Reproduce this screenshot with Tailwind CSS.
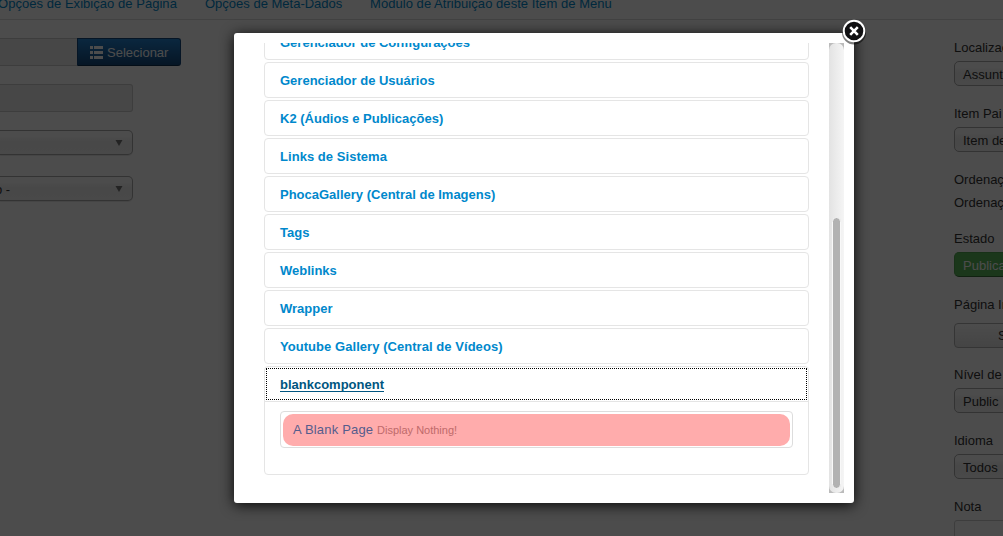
<!DOCTYPE html>
<html lang="pt-BR">
<head>
<meta charset="utf-8">
<title>Item de Menu</title>
<script src="https://cdn.jsdelivr.net/npm/@tailwindcss/browser@4"></script>
</head>
<body class="relative h-[536px] w-[1003px] overflow-hidden bg-white font-['Liberation_Sans',Arial,sans-serif] text-[13px] leading-[18px] text-[#333]">
<div class="flex h-full flex-col whitespace-nowrap">
  <nav class="-ml-0.5 flex h-5 shrink-0 items-start gap-7 border-b border-[#ddd] text-[#0088cc]">
    <a class="-mt-[5px] w-[179px] tracking-[0.04px]">Opções de Exibição de Página</a>
    <a class="-mt-[5px] w-[137px]">Opções de Meta-Dados</a>
    <a class="-mt-[5px] tracking-[0.05px]">Módulo de Atribuição deste Item de Menu</a>
  </nav>
  <div class="flex grow justify-between">
    <main class="flex w-[181px] flex-col items-start pt-[18px]">
      <div class="flex h-7 w-full">
        <div class="w-[77px] border-y border-[#ccc] bg-[#eee]"></div>
        <button class="flex grow items-center rounded-r-[3px] border border-[#15497c] border-b-[#0d2e4e] bg-linear-to-b from-[#2384d3] to-[#15497c] pl-3 text-white">
          <svg class="mr-1 h-[13px] w-[13px]" viewBox="0 0 13 13" fill="#fff"><path d="M0 0h3v3H0zM4 0h9v3H4zM0 5h3v3H0zM4 5h9v3H4zM0 10h3v3H0zM4 10h9v3H4z"/></svg>
          <span class="pt-0.5">Selecionar</span>
        </button>
      </div>
      <div class="mt-[18px] h-7 w-[133px] rounded-r-[3px] border border-l-0 border-[#ccc] bg-[#eee]"></div>
      <div class="mt-[18px] flex h-[25px] w-[133px] items-center justify-end rounded-r-[5px] border border-l-0 border-[#aaa] bg-linear-to-b from-white from-20% via-[#f0f0f0] via-50% to-[#f4f4f4] pr-[9px] shadow-[0_1px_1px_rgba(0,0,0,.1)]">
        <svg class="h-[6px] w-[8px]" viewBox="0 0 8 6" fill="#777"><path d="M.5 0h7L4 6z"/></svg>
      </div>
      <div class="mt-[21px] flex h-[25px] w-[133px] items-center justify-between rounded-r-[5px] border border-l-0 border-[#aaa] bg-linear-to-b from-white from-20% via-[#f0f0f0] via-50% to-[#f4f4f4] pr-[9px] shadow-[0_1px_1px_rgba(0,0,0,.1)]">
        <span class="-ml-[5px] pt-0.5">o -</span>
        <svg class="h-[6px] w-[8px]" viewBox="0 0 8 6" fill="#777"><path d="M.5 0h7L4 6z"/></svg>
      </div>
    </main>
    <aside class="flex w-[49px] flex-col overflow-hidden pt-[19px]">
      <label>Localização</label>
      <div class="mt-1 h-[25px] w-[220px] shrink-0 rounded-[5px] border border-[#aaa] bg-linear-to-b from-white from-20% via-[#f0f0f0] via-50% to-[#f4f4f4] px-2 pt-1">Assuntos</div>
      <label class="mt-[19px]">Item Pai</label>
      <div class="mt-1 h-[25px] w-[220px] shrink-0 rounded-[5px] border border-[#aaa] bg-linear-to-b from-white from-20% via-[#f0f0f0] via-50% to-[#f4f4f4] px-2 pt-1">Item de Menu Raiz</div>
      <label class="mt-[19px]">Ordenação</label>
      <p class="mt-[5px]">Ordenação</p>
      <label class="mt-[18px]">Estado</label>
      <div class="mt-1 h-[25px] w-[220px] shrink-0 rounded-[5px] border border-[#51a351] border-b-[#387038] bg-[#5bb75b] px-2 pt-1 text-white">Publicado</div>
      <label class="mt-[19px]">Página Inicial</label>
      <button class="mt-[9px] h-[25px] w-[103px] shrink-0 rounded-[4px] border border-[#b3b3b3] bg-linear-to-b from-white to-[#e6e6e6] pl-[43px] text-left">Sim</button>
      <label class="mt-[18px]">Nível de Acesso</label>
      <div class="mt-1 h-[25px] w-[220px] shrink-0 rounded-[5px] border border-[#aaa] bg-linear-to-b from-white from-20% via-[#f0f0f0] via-50% to-[#f4f4f4] px-2 pt-1">Public</div>
      <label class="mt-[19px]">Idioma</label>
      <div class="mt-1 h-[25px] w-[220px] shrink-0 rounded-[5px] border border-[#aaa] bg-linear-to-b from-white from-20% via-[#f0f0f0] via-50% to-[#f4f4f4] px-2 pt-1">Todos</div>
      <label class="mt-[19px]">Nota</label>
      <div class="mt-1 h-[28px] w-[220px] shrink-0 rounded-[3px] border border-[#ccc] bg-white"></div>
    </aside>
  </div>
</div>

<div class="absolute inset-0 bg-black/70"></div>

<section class="absolute top-[33px] left-[234px] h-[470px] w-[620px] rounded-[3px] bg-white p-2.5 shadow-[0_2px_14px_rgba(0,0,0,.9)]">
  <div class="flex h-[450px] overflow-hidden">
    <div class="-mt-[19px] ml-5 flex w-[545px] shrink-0 flex-col gap-0.5 font-bold text-[#0088cc]">
      <a class="h-9 shrink-0 rounded-[4px] border border-[#e5e5e5] px-[15px] pt-[9px]">Gerenciador de Configurações</a>
      <a class="h-9 shrink-0 rounded-[4px] border border-[#e5e5e5] px-[15px] pt-[9px]">Gerenciador de Usuários</a>
      <a class="h-9 shrink-0 rounded-[4px] border border-[#e5e5e5] px-[15px] pt-[9px]">K2 (Áudios e Publicações)</a>
      <a class="h-9 shrink-0 rounded-[4px] border border-[#e5e5e5] px-[15px] pt-[9px] tracking-[0.05px]">Links de Sistema</a>
      <a class="h-9 shrink-0 rounded-[4px] border border-[#e5e5e5] px-[15px] pt-[9px]">PhocaGallery (Central de Imagens)</a>
      <a class="h-9 shrink-0 rounded-[4px] border border-[#e5e5e5] px-[15px] pt-[9px]">Tags</a>
      <a class="h-9 shrink-0 rounded-[4px] border border-[#e5e5e5] px-[15px] pt-[9px]">Weblinks</a>
      <a class="h-9 shrink-0 rounded-[4px] border border-[#e5e5e5] px-[15px] pt-[9px]">Wrapper</a>
      <a class="h-9 shrink-0 rounded-[4px] border border-[#e5e5e5] px-[15px] pt-[9px] tracking-[0.05px]">Youtube Gallery (Central de Vídeos)</a>
      <div class="h-[109px] shrink-0 rounded-[4px] border border-[#e5e5e5]">
        <div class="h-[35px] border-b border-[#e5e5e5] p-px">
          <a class="block h-[32px] border border-dotted border-black px-[13px] pt-[7px] text-[#005580]"><span class="inline-block h-4 border-b border-[#005580]">blankcomponent</span></a>
        </div>
        <div class="mx-[15px] mt-[9px] h-[37px] rounded-[4px] border border-[#ddd] p-0.5 font-normal">
          <div class="h-8 rounded-[10px] bg-[#ffacac] px-2.5 py-[7px] text-[#555c8c]"><span class="tracking-[0.18px]">A Blank Page </span><small class="text-[11px] text-[#be6a6a]">Display Nothing!</small></div>
        </div>
      </div>
    </div>
    <div class="ml-5 w-[15px] shrink-0 bg-[#bbb]">
      <div class="h-full rounded-[7px] bg-linear-to-r from-[#e3e3e3] to-[#f5f5f5] px-[3px] pt-[174px] pb-1">
        <div class="h-full rounded-[5px] border border-[#f8f8f8] bg-[#b2b2b2]"></div>
      </div>
    </div>
  </div>
  <svg class="absolute -top-4 left-[605px] h-[30px] w-[30px]" viewBox="0 0 30 30"><circle cx="15" cy="15.5" r="12" fill="#000" opacity=".5"/><circle cx="15" cy="14" r="10.3" fill="#101012" stroke="#fff" stroke-width="2"/><path d="M11.2 10.2l7.6 7.6M18.8 10.2l-7.6 7.6" stroke="#fff" stroke-width="2.6"/></svg>
</section>
</body>
</html>
